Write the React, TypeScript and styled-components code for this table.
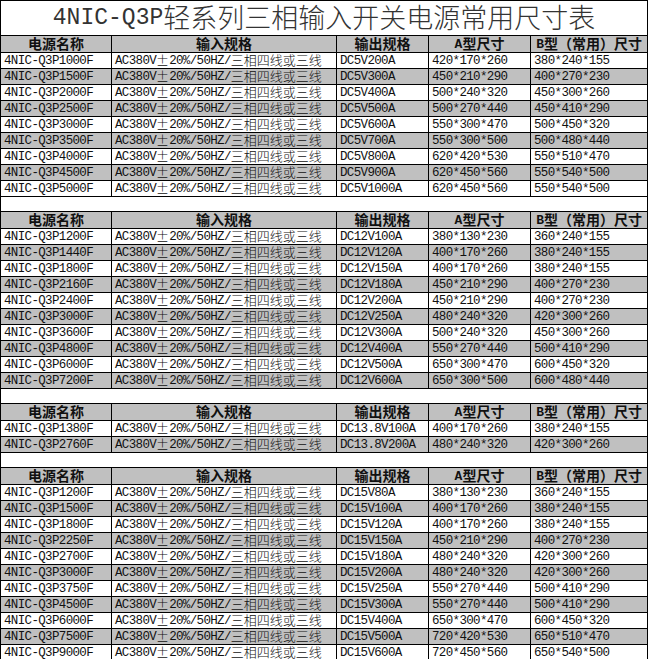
import React from "react";
import styled, { createGlobalStyle } from "styled-components";

const GlobalStyle = createGlobalStyle`
  body {
    margin: 0;
    background: #ffffff;
  }
`;

const Sheet = styled.table`
  border-collapse: collapse;
  table-layout: fixed;
  width: 647px;
  font-family: "Liberation Mono", "Noto Sans CJK SC", monospace;
  color: #111;
`;

const TitleCell = styled.td`
  height: 34px;
  padding: 0;
  border: 1px solid #000;
  text-align: center;
  font-size: 23px;
  font-weight: 400;
  color: #333;
  white-space: nowrap;
  line-height: 30px;
`;

const HeadCell = styled.th`
  height: 16px;
  padding: 0;
  border: 1px solid #000;
  background: #c0c0c0;
  text-align: center;
  font-size: 13px;
  font-weight: 700;
  line-height: 15px;
  white-space: nowrap;
  overflow: hidden;
`;

const Row = styled.tr<{ $shade: boolean }>`
  background: ${(p) => (p.$shade ? "#c0c0c0" : "#ffffff")};
`;

const Cell = styled.td`
  height: 15px;
  padding: 0 0 0 3px;
  border: 1px solid #000;
  font-size: 12.5px;
  letter-spacing: -0.65px;
  line-height: 14px;
  white-space: nowrap;
  overflow: hidden;
`;

const GapCell = styled.td`
  height: 14px;
  padding: 0;
  border-left: 1px solid #000;
  border-right: 1px solid #000;
  background: #ffffff;
`;

// line-height a little under the box height lifts the ideographs onto the latin baseline
const Wide = styled.span<{ $size: number; $bold?: boolean; $box: number }>`
  display: inline-block;
  height: ${(p) => p.$box}px;
  line-height: ${(p) => p.$box - 2}px;
  vertical-align: top;
  font-family: "Noto Sans CJK SC", sans-serif;
  font-size: ${(p) => p.$size}px;
  font-weight: ${(p) => (p.$bold ? 700 : 300)};
  letter-spacing: 0;
`;

const CJK = /[\u3000-\u9fff\uff00-\uffef±]/;

// CJK runs (and the full-width ±) get their own font size, the rest stays mono
const renderText = (text: string, size: number, box: number, bold = false) =>
  text.split(/([\u3000-\u9fff\uff00-\uffef±]+)/).map((part, i) =>
    CJK.test(part) ? (
      <Wide key={i} $size={size} $box={box} $bold={bold}>
        {part}
      </Wide>
    ) : (
      part
    )
  );

const INPUT = "AC380V±20%/50HZ/三相四线或三线";
const HEADERS = ["电源名称", "输入规格", "输出规格", "A型尺寸", "B型（常用）尺寸"];

type Item = [string, string, string, string];

const SECTIONS: Item[][] = [
  [
    ["4NIC-Q3P1000F", "DC5V200A", "420*170*260", "380*240*155"],
    ["4NIC-Q3P1500F", "DC5V300A", "450*210*290", "400*270*230"],
    ["4NIC-Q3P2000F", "DC5V400A", "500*240*320", "450*300*260"],
    ["4NIC-Q3P2500F", "DC5V500A", "500*270*440", "450*410*290"],
    ["4NIC-Q3P3000F", "DC5V600A", "550*300*470", "500*450*320"],
    ["4NIC-Q3P3500F", "DC5V700A", "550*300*500", "500*480*440"],
    ["4NIC-Q3P4000F", "DC5V800A", "620*420*530", "550*510*470"],
    ["4NIC-Q3P4500F", "DC5V900A", "620*450*560", "550*540*500"],
    ["4NIC-Q3P5000F", "DC5V1000A", "620*450*560", "550*540*500"],
  ],
  [
    ["4NIC-Q3P1200F", "DC12V100A", "380*130*230", "360*240*155"],
    ["4NIC-Q3P1440F", "DC12V120A", "400*170*260", "380*240*155"],
    ["4NIC-Q3P1800F", "DC12V150A", "400*170*260", "380*240*155"],
    ["4NIC-Q3P2160F", "DC12V180A", "450*210*290", "400*270*230"],
    ["4NIC-Q3P2400F", "DC12V200A", "450*210*290", "400*270*230"],
    ["4NIC-Q3P3000F", "DC12V250A", "480*240*320", "420*300*260"],
    ["4NIC-Q3P3600F", "DC12V300A", "500*240*320", "450*300*260"],
    ["4NIC-Q3P4800F", "DC12V400A", "550*270*440", "500*410*290"],
    ["4NIC-Q3P6000F", "DC12V500A", "650*300*470", "600*450*320"],
    ["4NIC-Q3P7200F", "DC12V600A", "650*300*500", "600*480*440"],
  ],
  [
    ["4NIC-Q3P1380F", "DC13.8V100A", "400*170*260", "380*240*155"],
    ["4NIC-Q3P2760F", "DC13.8V200A", "480*240*320", "420*300*260"],
  ],
  [
    ["4NIC-Q3P1200F", "DC15V80A", "380*130*230", "360*240*155"],
    ["4NIC-Q3P1500F", "DC15V100A", "400*170*260", "380*240*155"],
    ["4NIC-Q3P1800F", "DC15V120A", "400*170*260", "380*240*155"],
    ["4NIC-Q3P2250F", "DC15V150A", "450*210*290", "400*270*230"],
    ["4NIC-Q3P2700F", "DC15V180A", "480*240*320", "420*300*260"],
    ["4NIC-Q3P3000F", "DC15V200A", "480*240*320", "420*300*260"],
    ["4NIC-Q3P3750F", "DC15V250A", "550*270*440", "500*410*290"],
    ["4NIC-Q3P4500F", "DC15V300A", "550*270*440", "500*410*290"],
    ["4NIC-Q3P6000F", "DC15V400A", "650*300*470", "600*450*320"],
    ["4NIC-Q3P7500F", "DC15V500A", "720*420*530", "650*510*470"],
    ["4NIC-Q3P9000F", "DC15V600A", "720*450*560", "650*540*500"],
  ],
];

const App: React.FC = () => {
  return (
    <>
      <GlobalStyle />
      <Sheet>
        <colgroup>
          <col style={{ width: 111 }} />
          <col style={{ width: 225 }} />
          <col style={{ width: 92 }} />
          <col style={{ width: 102 }} />
          <col style={{ width: 117 }} />
        </colgroup>
        <tbody>
          <tr>
            <TitleCell colSpan={5}>
              {renderText("4NIC-Q3P轻系列三相输入开关电源常用尺寸表", 27, 30)}
            </TitleCell>
          </tr>
          {SECTIONS.map((items, s) => (
            <React.Fragment key={s}>
              {s > 0 && (
                <tr>
                  <GapCell colSpan={5} />
                </tr>
              )}
              <tr>
                {HEADERS.map((h) => (
                  <HeadCell key={h}>{renderText(h, 14, 15, true)}</HeadCell>
                ))}
              </tr>
              {items.map(([name, output, a, b], i) => (
                <Row key={name + i} $shade={i % 2 === 1}>
                  <Cell>{name}</Cell>
                  <Cell>{renderText(INPUT, 13, 14)}</Cell>
                  <Cell>{output}</Cell>
                  <Cell>{a}</Cell>
                  <Cell>{b}</Cell>
                </Row>
              ))}
            </React.Fragment>
          ))}
        </tbody>
      </Sheet>
    </>
  );
};

export default App;
